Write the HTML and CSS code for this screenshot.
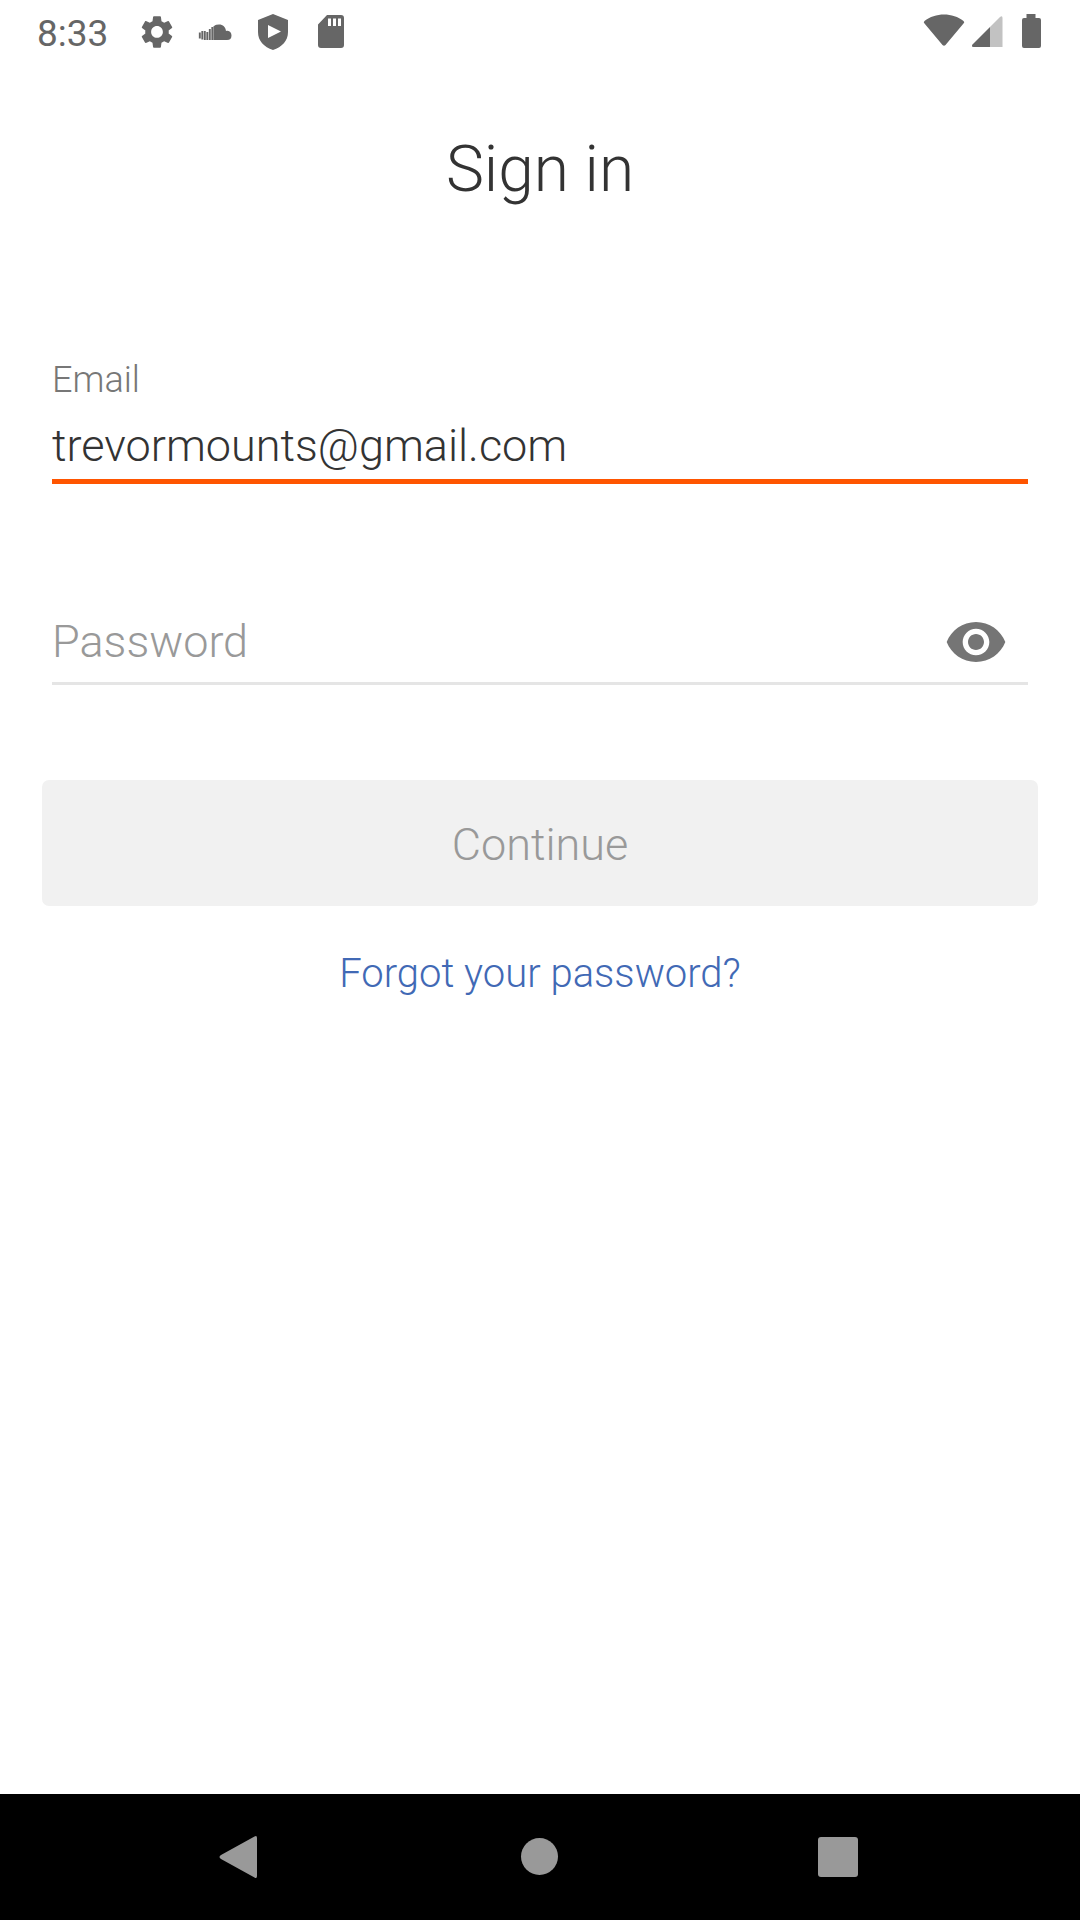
FILE: index.html
```html
<!DOCTYPE html>
<html lang="en">
<head>
<meta charset="utf-8">
<meta name="viewport" content="width=device-width, initial-scale=1">
<title>Sign in</title>
<link rel="stylesheet" href="styles.css">
</head>
<body>
<div class="screen">
  <header class="status">
    <div class="status-group">
      <time class="clock">8:33</time>
      <svg class="status-icon" viewBox="0 0 40 40" aria-hidden="true"><path transform="translate(.4 .4) scale(1.633)" d="M19.14 12.94c.04-.3.06-.61.06-.94 0-.32-.02-.64-.07-.94l2.03-1.58a.49.49 0 0 0 .12-.61l-1.92-3.32a.488.488 0 0 0-.59-.22l-2.39.96c-.5-.38-1.03-.7-1.62-.94l-.36-2.54a.484.484 0 0 0-.48-.41h-3.84c-.24 0-.43.17-.47.41l-.36 2.54c-.59.24-1.13.57-1.62.94l-2.39-.96c-.22-.08-.47 0-.59.22L2.74 8.87c-.12.21-.08.47.12.61l2.03 1.58c-.05.3-.09.63-.09.94s.02.64.07.94l-2.03 1.58a.49.49 0 0 0-.12.61l1.92 3.32c.12.22.37.29.59.22l2.39-.96c.5.38 1.03.7 1.62.94l.36 2.54c.05.24.24.41.48.41h3.84c.24 0 .44-.17.47-.41l.36-2.54c.59-.24 1.13-.56 1.62-.94l2.39.96c.22.08.47 0 .59-.22l1.92-3.32c.12-.22.07-.47-.12-.61l-2.01-1.58zM12 15.6c-1.98 0-3.6-1.62-3.6-3.6s1.62-3.6 3.6-3.6 3.6 1.62 3.6 3.6-1.62 3.6-3.6 3.6z"/></svg>
      <svg class="status-icon" viewBox="0 0 40 40" aria-hidden="true"><path d="M19.500 13.500Q21 12.500 24 12.500C28 12.500 30.500 15 31 19C34.500 18 36.500 20.500 36.500 23.500Q36.500 28 32 28H19.500z"/><path d="M4.800 20.500v6M7.300 19v8.500M9.800 19v9M12.300 20v8M14.800 17v11M17.300 15v13M19.500 14v14" fill="none" stroke="#666" stroke-width="1.900"/></svg>
      <svg class="status-icon" viewBox="0 0 40 40" aria-hidden="true"><path fill-rule="evenodd" d="M20 2 35 8V20C35 29 29 35 20 38 11 35 5 29 5 20V8zM15 13V26L28 19.500z"/></svg>
      <svg class="status-icon" viewBox="0 0 40 40" aria-hidden="true"><path fill-rule="evenodd" d="M16 3H30Q33 3 33 6V33Q33 36 30 36H10Q7 36 7 33V12.500zM17 6.500V14h3V6.500zM22 6.500V14h3V6.500zM27 6.500V14h3V6.500z"/></svg>
    </div>
    <div class="status-group status-right">
      <svg class="status-icon wifi" viewBox="0 0 42 40" aria-hidden="true"><path d="M1.500 11.500Q0 10 1.500 9C12 .2 30 .2 40.500 9Q42 10 40.500 11.500L22.500 33Q21 34.500 19.500 33z"/></svg>
      <svg class="status-icon" viewBox="0 0 40 40" aria-hidden="true"><path class="faint" d="M24 15 34 5Q36.500 3 36.500 6V35H24z"/><path d="M24 15V35H7.500Q5 35 6.500 32.500z"/></svg>
      <svg class="status-icon battery" viewBox="0 0 40 40" aria-hidden="true"><path d="M15.500 2h9v4H28Q30 6 30 8V34Q30 36 28 36H13Q11 36 11 34V8Q11 6 13 6h2.500z"/></svg>
    </div>
  </header>

  <main class="content">
    <h1 class="title">Sign in</h1>
    <form class="form">
      <div class="field field-active">
        <label class="label" for="email">Email</label>
        <input class="input" id="email" type="email" value="trevormounts@gmail.com">
      </div>
      <div class="field field-password">
        <input class="input" id="password" type="password" placeholder="Password" aria-label="Password">
        <button class="reveal" type="button" aria-label="Show password">
          <svg class="eye" viewBox="0 0 24 24" aria-hidden="true"><path d="M12 4.500C7 4.500 2.730 7.610 1 12c1.730 4.390 6 7.500 11 7.500s9.270-3.110 11-7.500c-1.730-4.390-6-7.500-11-7.500zM12 17c-2.760 0-5-2.240-5-5s2.240-5 5-5 5 2.240 5 5-2.240 5-5 5zm0-8c-1.660 0-3 1.340-3 3s1.340 3 3 3 3-1.340 3-3-1.340-3-3-3z"/></svg>
        </button>
      </div>
      <button class="submit" type="submit" disabled>Continue</button>
    </form>
    <a class="forgot" href="#forgot">Forgot your password?</a>
  </main>

  <nav class="navbar" aria-label="System">
    <button class="nav-button" type="button" aria-label="Back"><svg class="nav-icon" viewBox="0 0 48 48" aria-hidden="true"><path d="M3 22 36.500 3.500Q39 2 39 5V43Q39 46 36.500 44.500L3 26Q0 24 3 22z"/></svg></button>
    <button class="nav-button" type="button" aria-label="Home"><svg class="nav-icon" viewBox="0 0 48 48" aria-hidden="true"><circle cx="23.500" cy="23.500" r="18.500"/></svg></button>
    <button class="nav-button" type="button" aria-label="Recent apps"><svg class="nav-icon" viewBox="0 0 48 48" aria-hidden="true"><rect x="4" y="4" width="40" height="40" rx="3"/></svg></button>
  </nav>
</div>
</body>
</html>
```
FILE: styles.css
```css
* {
  box-sizing: border-box;
}

body {
  margin: 0;
  background: #fff;
  color: #333;
  font-family: Roboto, "Liberation Sans", sans-serif;
  font-weight: 300;
}

button {
  margin: 0;
  padding: 0;
  border: 0;
  background: none;
  font: inherit;
}

svg {
  display: block;
}

.screen {
  display: flex;
  flex-direction: column;
  min-height: 100vh;
}

.status {
  display: flex;
  justify-content: space-between;
  height: 64px;
  padding: 0 29px 0 37px;
}

.status-group {
  display: flex;
  align-items: center;
  gap: 18px;
}

.status-right {
  gap: 1px;
}

.clock {
  width: 82px;
  padding-top: 2px;
  color: #666;
  font-size: 37px;
  font-weight: 400;
}

.status-icon {
  width: 40px;
  height: 40px;
  fill: #666;
}

.wifi {
  width: 42px;
}

.battery {
  margin-left: 4px;
}

.faint {
  fill: #c2c2c2;
}

.content {
  flex: 1;
  display: flex;
  flex-direction: column;
  align-items: center;
  padding: 68px 42px 0;
}

.title {
  margin: 0;
  font-size: 64px;
  font-weight: 300;
  line-height: 76px;
}

.form {
  width: 100%;
  margin-top: 148px;
}

.field {
  display: flex;
  margin: 0 10px;
  border-bottom: 3px solid #e5e5e5;
}

.field-active {
  flex-direction: column;
  border-bottom: 5px solid #ff5500;
}

.field-password {
  align-items: center;
  margin-top: 120px;
  padding: 0 20px 3px 0;
}

.label {
  color: #777;
  font-size: 36px;
  line-height: 48px;
}

.input {
  flex: 1;
  min-width: 0;
  height: 75px;
  padding: 0;
  border: 0;
  outline: 0;
  background: none;
  color: #333;
  font: inherit;
  font-size: 45px;
}

.field-active .input {
  flex: none;
  padding-top: 8px;
}

.input::placeholder {
  color: #999;
  opacity: 1;
}

.eye {
  width: 64px;
  height: 64px;
  fill: #757575;
}

.submit {
  width: 100%;
  height: 126px;
  margin-top: 95px;
  padding-top: 2px;
  border-radius: 7px;
  background: #f1f1f1;
  color: #999;
  font-size: 45px;
}

.forgot {
  margin-top: 44px;
  color: #4169b5;
  font-size: 40px;
  line-height: 48px;
  text-decoration: none;
}

.navbar {
  display: flex;
  justify-content: center;
  gap: 250px;
  height: 126px;
  background: #000;
}

.nav-button {
  display: flex;
  align-items: center;
}

.nav-icon {
  width: 48px;
  height: 48px;
  fill: #999;
}
```
